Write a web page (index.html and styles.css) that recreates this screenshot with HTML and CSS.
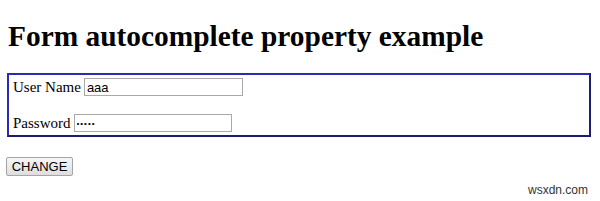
FILE: index.html
```html
<!DOCTYPE html>
<html lang="en">
<head>
    <meta charset="UTF-8">
    <title>Form autocomplete property example</title>
    <link rel="stylesheet" href="styles.css">
</head>
<body>
    <h1>Form autocomplete property example</h1>

    <form id="form1" class="login-box" autocomplete="on">
        <div class="row">
            <label for="usr">User Name</label>
            <input type="text" id="usr" class="field field-user" value="aaa">
        </div>
        <div class="row">
            <label for="pwd">Password</label>
            <input type="password" id="pwd" class="field field-pass" value="aaaaa">
        </div>
    </form>

    <button type="button" class="change-btn">CHANGE</button>

    <div class="watermark">wsxdn.com</div>
</body>
</html>
```

FILE: styles.css
```css
body {
    margin: 0;
    padding: 0 9px 0 7px;
    font-family: "Liberation Serif", "Times New Roman", serif;
    color: #000;
    background: #fff;
}
h1 {
    margin: 20px 0 0 1px;
    font-size: 29.4px;
    line-height: 33px;
    font-weight: bold;
}
.login-box {
    margin-top: 20px;
    padding: 3px 4px;
    border: 2px solid;
    border-color: #2b2bb4 #1c1c72 #1c1c72 #2b2bb4;
    display: flex;
    flex-direction: column;
    gap: 18px;
}
.row {
    display: flex;
    align-items: center;
    gap: 3px;
    height: 18px;
    font-size: 15px;
}
.field {
    box-sizing: border-box;
    height: 18px;
    padding: 0 2px;
    border: 1px solid #a9a9a9;
    font-family: "Liberation Sans", Arial, sans-serif;
    font-size: 13px;
    color: #000;
    outline: none;
}
.field-user {
    width: 159px;
}
.field-pass {
    width: 158px;
    font-size: 8px;
    letter-spacing: 1px;
}
.change-btn {
    margin-top: 20px;
    margin-left: -1px;
    width: 67px;
    height: 19px;
    padding: 0;
    font-family: "Liberation Sans", Arial, sans-serif;
    font-size: 13px;
    color: #000;
    background: linear-gradient(#f6f6f6, #dedede);
    border: 1px solid #a5a5a5;
    border-radius: 2px;
}
.watermark {
    position: absolute;
    right: 12px;
    top: 183px;
    font-family: "Liberation Sans", Arial, sans-serif;
    font-size: 12px;
    color: #333;
}
```
